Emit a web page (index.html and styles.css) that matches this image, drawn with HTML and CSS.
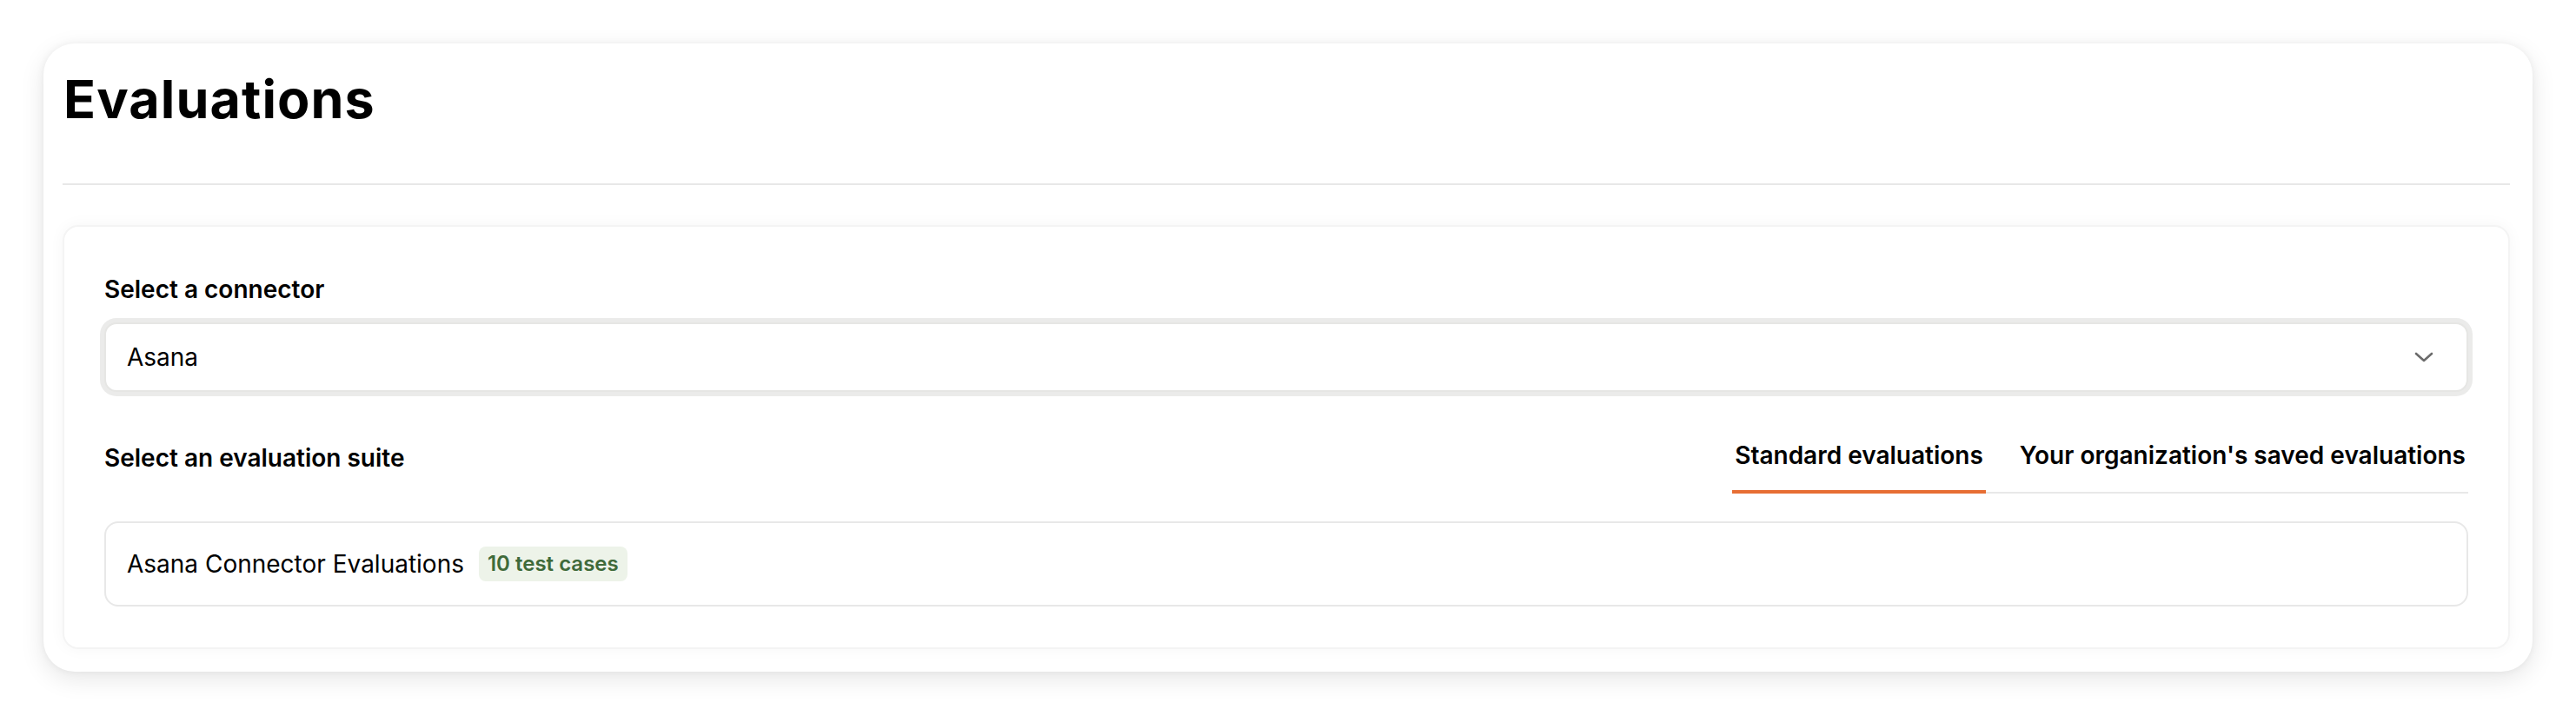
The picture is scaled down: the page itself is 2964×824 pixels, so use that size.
FILE: index.html
```html
<!DOCTYPE html>
<html lang="en">
<head>
<meta charset="utf-8">
<title>Evaluations</title>
<link rel="stylesheet" href="styles.css">
</head>
<body>
<div class="page">
  <div class="panel">
    <header class="panel-header">
      <h1 class="title">Evaluations</h1>
    </header>
    <section class="card">
      <div class="field-label">Select a connector</div>
      <div class="select">
        <span class="select-value">Asana</span>
        <svg class="chevron" width="22" height="12" viewBox="0 0 22 12" aria-hidden="true">
          <polyline points="2,2 11,10 20,2" fill="none" stroke="#6b6b6b" stroke-width="2.6" stroke-linecap="round" stroke-linejoin="round"/>
        </svg>
      </div>
      <div class="suite-row">
        <div class="field-label suite-label">Select an evaluation suite</div>
        <div class="tabs">
          <div class="tab active">Standard evaluations</div>
          <div class="tab">Your organization's saved evaluations</div>
        </div>
      </div>
      <div class="suite-item">
        <span class="suite-name">Asana Connector Evaluations</span>
        <span class="badge">10 test cases</span>
      </div>
    </section>
  </div>
</div>
</body>
</html>
```
FILE: styles.css
```css
* { box-sizing: border-box; }
html, body { margin: 0; padding: 0; background: #ffffff; }
body {
  font-family: Inter, "Noto Sans", "Liberation Sans", sans-serif;
  color: #0a0a0a;
}
.page { padding: 50px; }
.panel {
  background: #ffffff;
  border-radius: 36px;
  padding: 28px 26px 26px 22px;
  box-shadow: 0 8px 28px rgba(0, 0, 0, 0.10), 0 0 8px rgba(0, 0, 0, 0.05);
}
.panel-header {
  padding-bottom: 61px;
  border-bottom: 2px solid #e8e8e8;
}
.title {
  margin: 0;
  font-size: 61px;
  line-height: 72px;
  font-weight: 700;
  letter-spacing: 1.1px;
  color: #000;
  padding-left: 1px;
}
.card {
  margin-top: 46px;
  background: #ffffff;
  border: 2px solid #f4f4f4;
  border-radius: 18px;
  padding: 52px 46px 47px;
  box-shadow: 0 0 18px rgba(0, 0, 0, 0.04);
}
.field-label {
  font-size: 28px;
  line-height: 40px;
  font-weight: 600;
  color: #000;
}
.select {
  margin-top: 18px;
  height: 80px;
  display: flex;
  align-items: center;
  justify-content: space-between;
  border: 2px solid #e6e6e4;
  border-radius: 14px;
  box-shadow: 0 0 0 5px #ebebea;
  padding: 0 38px 0 24px;
  background: #fff;
}
.select-value {
  font-size: 28px;
  line-height: 40px;
  color: #000;
}
.chevron { display: block; }
.suite-row {
  margin-top: 53px;
  display: flex;
  justify-content: space-between;
  align-items: flex-start;
}
.suite-label { padding-top: 3px; }
.tabs {
  display: flex;
  gap: 36px;
  border-bottom: 2px solid #e8e8e8;
}
.tab {
  font-size: 28px;
  line-height: 40px;
  font-weight: 600;
  color: #000;
  padding: 0 3px 20px;
  margin-bottom: -2px;
  border-bottom: 4px solid transparent;
}
.tab.active { border-bottom-color: #e76e34; }
.suite-item {
  margin-top: 32px;
  display: flex;
  align-items: center;
  gap: 17px;
  border: 2px solid #e8e8e8;
  border-radius: 16px;
  padding: 27px 24px;
}
.suite-name {
  font-size: 28px;
  line-height: 40px;
  color: #000;
}
.badge {
  font-size: 24px;
  line-height: 32px;
  font-weight: 600;
  color: #3f6a3a;
  background: #edf3e9;
  border-radius: 8px;
  padding: 4px 10px;
}
```
